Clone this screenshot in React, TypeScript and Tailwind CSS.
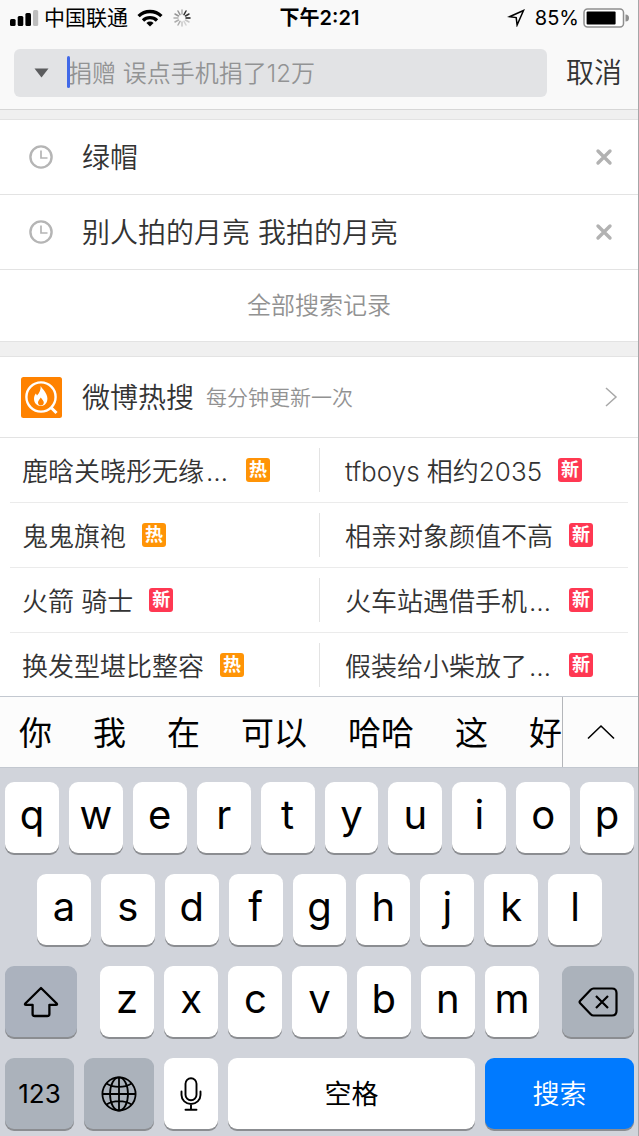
import React from "react";

const history = ["绿帽", "别人拍的月亮 我拍的月亮"];

type Tag = "热" | "新";
const topics: { text: string; cut?: boolean; tag: Tag }[] = [
  { text: "鹿晗关晓彤无缘", cut: true, tag: "热" },
  { text: "tfboys 相约2035", tag: "新" },
  { text: "鬼鬼旗袍", tag: "热" },
  { text: "相亲对象颜值不高", tag: "新" },
  { text: "火箭 骑士", tag: "新" },
  { text: "火车站遇借手机", cut: true, tag: "新" },
  { text: "换发型堪比整容", tag: "热" },
  { text: "假装给小柴放了", cut: true, tag: "新" },
];

const candidates = ["你", "我", "在", "可以", "哈哈", "这", "好"];

function StatusBar() {
  return (
    <div className="grid h-9 grid-cols-[1fr_auto_1fr] items-center pl-[10px] pr-[9px] text-[20px] leading-6 text-black">
      <div className="flex items-center">
        <svg width="29" height="18" viewBox="0 0 29 18" aria-hidden="true">
          <rect x="0" y="10" width="5.6" height="7" rx="1.5" />
          <rect x="7.7" y="7" width="5.6" height="10" rx="1.5" />
          <rect x="15.4" y="4" width="5.6" height="13" rx="1.5" />
          <rect x="23" y="1" width="5.2" height="16" rx="1.5" fill="#bdbdbd" />
        </svg>
        <span className="ml-[5px] text-[21px]">中国联通</span>
        <svg className="ml-[9px]" width="26" height="18" viewBox="0 0 26 18" aria-hidden="true">
          <g fill="none" stroke="#000" strokeWidth="3.3">
            <path d="M1.6 7.2a16.2 16.2 0 0 1 22.8 0" />
            <path d="M6 11.5a10 10 0 0 1 14 0" />
          </g>
          <path d="M13 17.5l-3.6-3.600a5.200 5.200 0 0 1 7.200 0z" />
        </svg>
        <svg className="ml-[10px]" width="18" height="18" viewBox="0 0 18 18" stroke="#000" strokeWidth="1.5" strokeLinecap="round" aria-hidden="true">
          <path d="M9 1v4" opacity=".3" />
          <path d="M13 2l-2 3.600" opacity=".8" />
          <path d="M16 5l-3.500 2" opacity=".8" />
          <path d="M13 9h4" opacity=".9" />
          <path d="M12.500 11l3.500 2" opacity=".2" />
          <path d="M11 12.400l2 3.600" opacity=".15" />
          <path d="M9 13v4" opacity=".2" />
          <path d="M7 12.400l-2 3.600" opacity=".3" />
          <path d="M5.500 11L2 13" opacity=".3" />
          <path d="M5 9H1" opacity=".3" />
          <path d="M5.500 7L2 5" opacity=".4" />
          <path d="M7 5.600L5 2" opacity=".4" />
        </svg>
      </div>
      <span className="font-semibold">下午2:21</span>
      <div className="flex items-center justify-end">
        <svg width="18" height="18" viewBox="0 0 18 18" fill="none" stroke="#000" strokeWidth="1.500" aria-hidden="true">
          <path d="M16.500 1.500L2.500 7.700l6.700.900.900 7.400z" />
        </svg>
        <span className="ml-[10px]">85%</span>
        <svg className="ml-1" width="46" height="20" viewBox="0 0 46 20" aria-hidden="true">
          <rect x="1" y="1" width="39.500" height="18" rx="3.500" fill="#fff" stroke="#8f8f8f" strokeWidth="1.500" />
          <rect x="3.600" y="3.600" width="29" height="12.800" rx="1" />
          <path d="M42.500 6.500a3.500 3.500 0 0 1 0 7z" fill="#8f8f8f" />
        </svg>
      </div>
    </div>
  );
}

function SearchBar() {
  return (
    <form className="flex items-center pb-3 pl-[14px] pt-[13px]" onSubmit={(e) => e.preventDefault()}>
      <div className="relative flex h-12 min-w-0 flex-1 items-center rounded-md bg-[#e2e3e5]">
        <button type="button" aria-label="搜索类型" className="flex h-full w-[54px] items-center justify-center">
          <svg width="15" height="10" viewBox="0 0 15 10" aria-hidden="true">
            <path d="M0.500 0.500h14L7.500 9.500z" fill="#5b5c5e" />
          </svg>
        </button>
        <input
          type="text"
          aria-label="搜索"
          placeholder="捐赠 误点手机捐了12万"
          className="h-full min-w-0 flex-1 bg-transparent text-[24px] font-[350] text-[#333] outline-none placeholder:text-[#929394]"
        />
        <span className="absolute left-[53px] top-[7px] h-8 w-[3px] rounded-full bg-[#4169e8]" />
      </div>
      <button type="button" className="pl-[19px] pr-4 text-[28px] font-[350] leading-9 text-[#333]">
        取消
      </button>
    </form>
  );
}

function HistoryRow({ text }: { text: string }) {
  return (
    <li className="flex h-[75px] items-center border-b border-[#e3e3e3] pl-7 pr-6">
      <svg width="26" height="26" viewBox="0 0 26 26" fill="none" stroke="#b5b5b5" aria-hidden="true">
        <circle cx="13" cy="13" r="10.600" strokeWidth="2.400" />
        <path d="M13 6.500v7.500h6.500" strokeWidth="1.700" />
      </svg>
      <a href="#" className="ml-7 flex-1 pt-[2px] text-[28px] font-[350] leading-9 text-[#333]">
        {text}
      </a>
      <button type="button" aria-label={"删除 " + text} className="flex h-9 w-5 items-center justify-center">
        <svg width="18" height="18" viewBox="0 0 18 18" stroke="#b2b2b2" strokeWidth="3.400" strokeLinecap="round" aria-hidden="true">
          <path d="M3 3l12 12M15 3L3 15" />
        </svg>
      </button>
    </li>
  );
}

function HotHeader() {
  return (
    <a href="#" className="flex h-[81px] items-center border-b border-[#e3e3e3] pl-[21px] pr-5">
      <svg width="41" height="41" viewBox="0 0 41 41" aria-hidden="true">
        <rect width="41" height="41" rx="2.500" fill="#ff8200" />
        <circle cx="20" cy="20" r="14.600" fill="none" stroke="#fff" strokeWidth="2.400" />
        <path d="M30 30.500l5.500 5.500" stroke="#fff" strokeWidth="3" />
        <path
          fillRule="evenodd"
          fill="#fff"
          d="M19.700 9c1.500 3 6.700 7.200 6.700 12.400 0 4.600-3.100 7.600-6.700 7.600S13 26 13 21.800c0-2.200.8-3.900 1.900-5.300l1.100 2c2.500-2.500 3.800-5.900 3.700-9.500zM19.800 20.400c-1 2-2.800 3-2.800 5.200 0 1.800 1.300 3 2.900 3s2.900-1.200 2.900-3c0-2.200-2-3.200-3-5.200z"
        />
      </svg>
      <h2 className="ml-5 pt-[2px] text-[28px] font-[350] leading-9 text-[#333]">微博热搜</h2>
      <span className="ml-3 flex-1 pt-[2px] text-[21px] font-[350] leading-8 text-[#929292]">每分钟更新一次</span>
      <svg width="14" height="20" viewBox="0 0 14 20" fill="none" stroke="#a8a8a8" strokeWidth="1.500" aria-hidden="true">
        <path d="M2 1l10 9L2 19" />
      </svg>
    </a>
  );
}

function HotGrid() {
  return (
    <ul className="mx-[10px] grid grid-cols-2">
      {topics.map((t, i) => (
        <li key={t.text} className={i < 6 ? "h-[65px] border-b border-[#ebebeb]" : "h-[63px]"}>
          <a
            href="#"
            className={
              i % 2 === 0
                ? "my-[10px] flex h-11 items-center pl-3"
                : "my-[10px] flex h-11 items-center border-l border-[#e3e3e3] pl-[25px]"
            }
          >
            <span className="whitespace-nowrap pt-[3px] text-[26px] font-[350] leading-9 text-[#333]">
              {t.text}
              {t.cut && <span className="inline-block w-[26px] text-center">…</span>}
            </span>
            <span
              className={
                t.tag === "热"
                  ? "ml-4 flex h-6 w-6 items-center justify-center rounded-[3px] bg-[#ff9406] text-[18px] font-bold leading-6 text-white"
                  : "ml-4 flex h-6 w-6 items-center justify-center rounded-[3px] bg-[#ff3852] text-[18px] font-bold leading-6 text-white"
              }
            >
              {t.tag}
            </span>
          </a>
        </li>
      ))}
    </ul>
  );
}

function Candidates() {
  return (
    <div className="flex h-[72px] border-y border-[#c3c8d0] bg-[#fcfcfc]">
      <div className="flex min-w-0 flex-1 items-center gap-[41px] overflow-hidden pl-[19px] pt-[2px]">
        {candidates.map((c) => (
          <button key={c} type="button" className="shrink-0 whitespace-nowrap text-[33px] leading-[48px] text-black">
            {c}
          </button>
        ))}
      </div>
      <button type="button" aria-label="展开候选" className="flex w-[76px] items-center justify-center border-l border-[#b4b6ba]">
        <svg width="28" height="16" viewBox="0 0 28 16" fill="none" stroke="#000" strokeWidth="1.600" aria-hidden="true">
          <path d="M1 14.500L14 2l13 12.500" />
        </svg>
      </button>
    </div>
  );
}

function LetterKey({ letter }: { letter: string }) {
  return (
    <button
      type="button"
      className="flex h-[71px] min-w-0 flex-1 items-center justify-center rounded-[9px] bg-white pb-[5px] text-[40px] leading-none text-black shadow-[0_2px_0_#8b8d91]"
    >
      {letter}
    </button>
  );
}

function Keyboard() {
  return (
    <div className="flex flex-col gap-[21px] bg-[#d1d4db] pb-[7px] pl-[5px] pr-1 pt-[14px]">
      <div className="flex gap-[10px]">
        {"qwertyuiop".split("").map((l) => (
          <LetterKey key={l} letter={l} />
        ))}
      </div>
      <div className="flex gap-[10px] px-8">
        {"asdfghjkl".split("").map((l) => (
          <LetterKey key={l} letter={l} />
        ))}
      </div>
      <div className="flex gap-[23px]">
        <button type="button" aria-label="上档" className="flex h-[71px] w-[72px] items-center justify-center rounded-[9px] bg-[#abb2be] shadow-[0_2px_0_#8b8d91]">
          <svg width="36" height="32" viewBox="0 0 36 32" fill="none" stroke="#000" strokeWidth="2.300" strokeLinejoin="round" aria-hidden="true">
            <path d="M18 2L2.300 17.500q-1 1.300.7 1.300h6.600V28q0 2 2 2h12.800q2 0 2-2v-9.200H33q1.700 0 .7-1.300z" />
          </svg>
        </button>
        <div className="flex min-w-0 flex-1 gap-[10px]">
          {"zxcvbnm".split("").map((l) => (
            <LetterKey key={l} letter={l} />
          ))}
        </div>
        <button type="button" aria-label="删除" className="flex h-[71px] w-[72px] items-center justify-center rounded-[9px] bg-[#abb2bb] shadow-[0_2px_0_#8b8d91]">
          <svg width="40" height="30" viewBox="0 0 40 30" fill="none" stroke="#000" strokeWidth="2.200" strokeLinejoin="round" aria-hidden="true">
            <path d="M15.500 1.500H34q4.500 0 4.500 4.500v18q0 4.500-4.500 4.500H15.500q-1.500 0-2.800-1.300L2.200 16.300q-1.200-1.300 0-2.600L12.700 2.800Q14 1.500 15.500 1.500z" />
            <path d="M18 9l12 12M30 9L18 21" />
          </svg>
        </button>
      </div>
      <div className="flex gap-[10px]">
        <button type="button" className="h-[71px] w-[69px] rounded-[9px] bg-[#abb2bb] text-[26px] text-black shadow-[0_2px_0_#8b8d91]">
          123
        </button>
        <button type="button" aria-label="切换输入法" className="flex h-[71px] w-[70px] items-center justify-center rounded-[9px] bg-[#abb2bb] shadow-[0_2px_0_#8b8d91]">
          <svg width="36" height="36" viewBox="0 0 36 36" fill="none" stroke="#000" strokeWidth="1.800" aria-hidden="true">
            <circle cx="18" cy="18" r="16.600" />
            <ellipse cx="18" cy="18" rx="9" ry="16.600" />
            <path d="M18 1.400v33.200M1.400 18h33.200M5.500 7.500C12.500 12 23.500 12 30.500 7.500M5.500 28.500c7-4.500 18-4.500 25 0" />
          </svg>
        </button>
        <button type="button" aria-label="听写" className="flex h-[71px] w-[54px] items-center justify-center rounded-[9px] bg-white shadow-[0_2px_0_#8b8d91]">
          <svg width="22" height="34" viewBox="0 0 22 34" fill="none" stroke="#000" strokeWidth="1.900" strokeLinecap="round" aria-hidden="true">
            <rect x="5.500" y="1.200" width="11" height="22" rx="5.500" />
            <path d="M1.500 14.500v3.500a9.500 9 0 0 0 19 0v-3.500M11 27v5.500M5.500 32.700h11" />
          </svg>
        </button>
        <button type="button" className="h-[71px] min-w-0 flex-1 rounded-[9px] bg-white pt-1 text-[27px] text-black shadow-[0_2px_0_#8b8d91]">
          空格
        </button>
        <button type="button" className="h-[71px] w-[149px] rounded-[9px] bg-[#007aff] pt-1 text-[27px] font-[350] text-white shadow-[0_2px_0_#8b8d91]">
          搜索
        </button>
      </div>
    </div>
  );
}

export default function App() {
  return (
    <div
      lang="zh-CN"
      className="border-r border-[#a6a6a8] bg-white font-['Inter','Noto_Sans_CJK_SC',sans-serif]"
    >
      <header className="border-b border-[#d6d6d6] bg-[#f9f9f9]">
        <StatusBar />
        <SearchBar />
      </header>
      <main>
        <div className="h-[10px] border-b border-[#e3e3e3] bg-[#f0f0f0]" />
        <ul>
          {history.map((h) => (
            <HistoryRow key={h} text={h} />
          ))}
        </ul>
        <button type="button" className="flex h-[71px] w-full items-center justify-center text-[24px] font-[350] text-[#929292]">
          全部搜索记录
        </button>
        <div className="h-4 border-y border-[#e3e3e3] bg-[#f0f0f0]" />
        <HotHeader />
        <HotGrid />
      </main>
      <Candidates />
      <Keyboard />
    </div>
  );
}
